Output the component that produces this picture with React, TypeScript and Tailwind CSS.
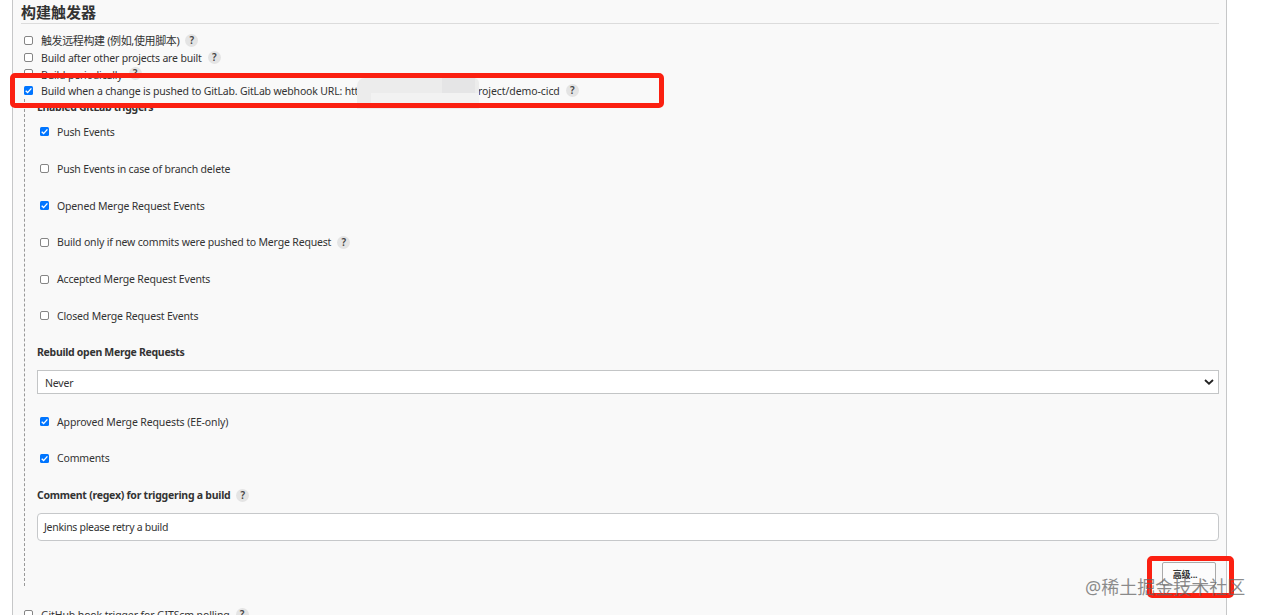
import type { ReactNode } from "react";

interface CheckRowProps {
  label: string;
  checked?: boolean;
  help?: boolean;
  className?: string;
  textClass?: string;
  children?: ReactNode;
}

function Checkbox({ checked }: { checked?: boolean }) {
  if (!checked) {
    return <span className="w-[9px] h-[9px] shrink-0 rounded-[2px] border border-[#858585] bg-white" />;
  }
  return (
    <span className="w-[9px] h-[9px] shrink-0 rounded-[1.5px] bg-[#0075ff]">
      <svg viewBox="0 0 9 9" className="block w-[9px] h-[9px]">
        <path d="M1.7 4.8 3.6 6.6 7.4 2.4" fill="none" stroke="#fff" strokeWidth="1.4" />
      </svg>
    </span>
  );
}

function Help() {
  return (
    <span className="ml-[6px] w-[13px] h-[13px] shrink-0 rounded-full bg-[#e4e4e4] text-[10px] leading-[13px] tracking-normal text-center font-semibold text-[#444]">
      ?
    </span>
  );
}

function CheckRow({ label, checked, help, className = "", textClass = "", children }: CheckRowProps) {
  return (
    <div className={`flex items-center ${className}`}>
      <Checkbox checked={checked} />
      <span className={`ml-2 ${textClass}`}>{label}</span>
      {children}
      {help && <Help />}
    </div>
  );
}

const events = [
  { label: "Push Events", checked: true },
  { label: "Push Events in case of branch delete" },
  { label: "Opened Merge Request Events", checked: true },
  { label: "Build only if new commits were pushed to Merge Request", help: true },
  { label: "Accepted Merge Request Events" },
  { label: "Closed Merge Request Events" },
];

export default function App() {
  return (
    <div className="relative w-[1264px] h-[615px] overflow-hidden bg-white pl-3 whitespace-nowrap text-[10.5px] leading-4 tracking-[-0.17px] text-[#333] font-['Noto_Sans','Noto_Sans_CJK_SC',sans-serif]">
      <div className="w-[1215px] h-[615px] overflow-hidden border-x border-[#c6c7c8] bg-[#f9f9f9] pl-2 pr-[7px]">
        <h2 className="h-6 border-b border-[#dcdcdc] text-[15px] leading-[25px] tracking-normal font-bold">构建触发器</h2>

        <div className="pl-[3px] pt-2">
          <CheckRow
            label="触发远程构建 (例如,使用脚本)"
            help
            className="h-[17px]"
            textClass="pt-px text-[11px] tracking-[-0.38px]"
          />
          <CheckRow label="Build after other projects are built" help className="h-4" textClass="pt-[2px]" />
          <CheckRow label="Build periodically" help className="h-[17px]" textClass="pt-[2px]" />
          <CheckRow
            label="Build when a change is pushed to GitLab. GitLab webhook URL: htt"
            checked
            help
            className="h-[17px]"
            textClass="w-[437px]"
          >
            <span className="tracking-[-0.08px]">roject/demo-cicd</span>
          </CheckRow>

          <div className="h-[487px] border-l border-dashed border-[#999] pl-3 pt-px">
            <div className="h-[13.6px] leading-[14px] tracking-[-0.3px] font-bold">Enabled GitLab triggers</div>
            <div className="pl-[3px]">
              {events.map((event) => (
                <CheckRow key={event.label} {...event} className="h-[36.8px]" />
              ))}
            </div>
            <div className="h-[35.6px] flex items-center tracking-[-0.3px] font-bold">Rebuild open Merge Requests</div>
            <div className="h-6 flex items-center justify-between border border-[#c3c5c6] bg-white pl-[7px] pr-1">
              <span className="pt-[2px]">Never</span>
              <svg viewBox="0 0 10 6" className="w-[10px] h-[6px]">
                <path d="M1 1 5 4.7 9 1" fill="none" stroke="#222" strokeWidth="1.8" />
              </svg>
            </div>
            <div className="pl-[3px] pt-[9.6px]">
              <CheckRow
                label="Approved Merge Requests (EE-only)"
                checked
                className="h-[36.8px]"
                textClass="tracking-[-0.12px]"
              />
              <CheckRow label="Comments" checked className="h-[36.8px]" textClass="pb-px" />
            </div>
            <div className="h-[35.8px] flex items-center tracking-[-0.25px] font-bold">
              Comment (regex) for triggering a build
              <Help />
            </div>
            <div className="h-7 flex items-center rounded-[4px] border border-[#c6c8ca] bg-white pl-[6px] tracking-[-0.29px]">
              Jenkins please retry a build
            </div>
            <div className="mt-[21px] flex justify-end pr-[3px]">
              <div className="w-[54px] h-6 rounded-[2px] border border-[#aaa] bg-[#fcfcfc] pr-2 text-center text-[9px] leading-[24px] font-bold">
                高级...
              </div>
            </div>
          </div>

          <CheckRow
            label="GitHub hook trigger for GITScm polling"
            help
            className="mt-5 h-4"
            textClass="pt-px tracking-[-0.12px]"
          />
        </div>
      </div>

      {/* masked part of the webhook url */}
      <div className="absolute left-[357px] top-[78px] w-[122px] h-[31px] rounded-tl-[8px] rounded-tr-[5px] overflow-hidden bg-[#ececec]">
        <div className="flex justify-end pr-1">
          <div className="w-[33px] h-[15px] bg-[#e5e5e6]" />
        </div>
        <div className="ml-[14px] h-[11px] bg-[#f2f2f2]" />
      </div>

      {/* highlight boxes */}
      <div className="absolute left-[10px] top-[73px] w-[654px] h-[35px] rounded-[5px] border-[5px] border-[#fb2011]" />
      <div className="absolute left-[1147px] top-[556px] w-[87px] h-[42px] rounded-[5px] border-[5px] border-[#fb2011]" />

      <div className="absolute left-[1085px] top-[574px] text-[18px] leading-[26px] tracking-normal text-[#666]/75">
        @稀土掘金技术社区
      </div>
    </div>
  );
}
